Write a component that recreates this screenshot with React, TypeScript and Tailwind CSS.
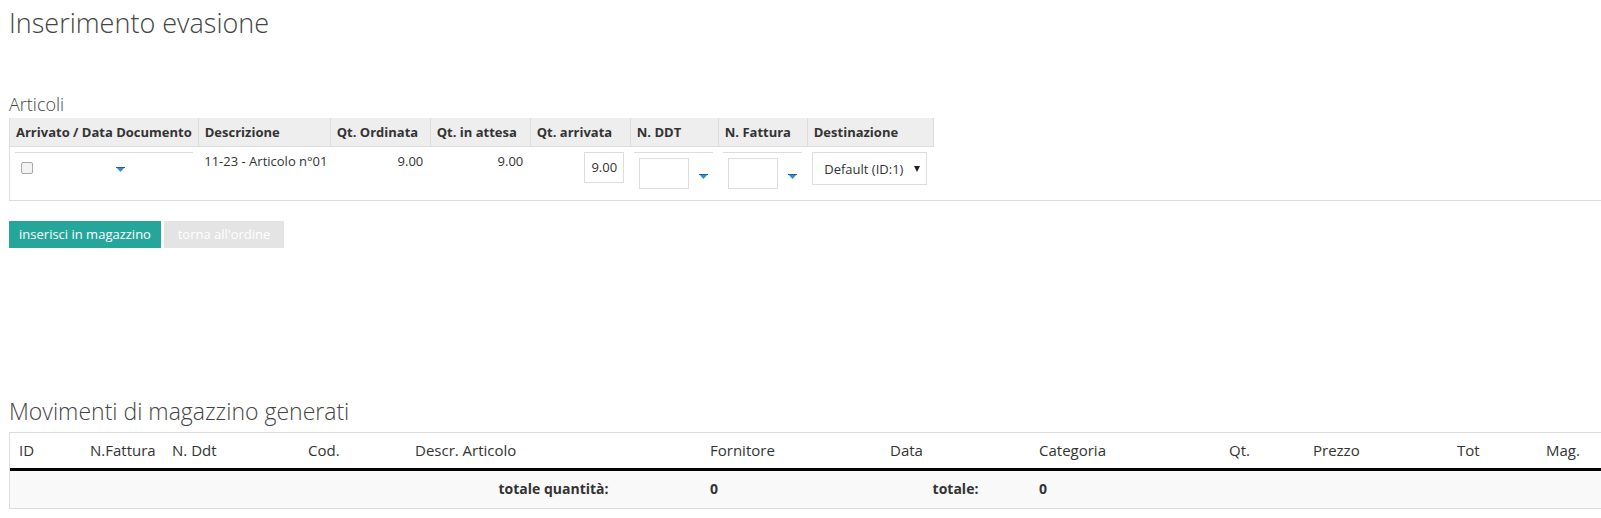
import React from 'react';

function Caret() {
  return (
    <svg width="9" height="5" viewBox="0 0 9 5" className="block">
      <polygon points="0,0 9,0 4.5,5" fill="#2f8ae4" />
      <rect x="0" y="0" width="9" height="1" fill="#2a5b8c" />
    </svg>
  );
}

function SelectArrow() {
  return (
    <svg width="6" height="6" viewBox="0 0 6 6" className="block">
      <polygon points="0,0 6,0 3,6" fill="#222" />
    </svg>
  );
}

function BoxPicker() {
  return (
    <div className="flex items-start border-t border-[#ddd]">
      <div className="ml-[5px] mt-[5px] h-[31px] w-[50px] border border-[#ddd] bg-white" />
      <div className="ml-[10px] mt-[21px]">
        <Caret />
      </div>
    </div>
  );
}

const headCls =
  'border-r border-b border-[#ddd] bg-[#eee] px-[6px] py-[5px] text-left font-bold leading-[18px] whitespace-nowrap';

const movCols = [
  { label: 'ID', w: 'w-[71px]' },
  { label: 'N.Fattura', w: 'w-[82px]' },
  { label: 'N. Ddt', w: 'w-[136px]' },
  { label: 'Cod.', w: 'w-[107px]' },
  { label: 'Descr. Articolo', w: 'w-[295px]' },
  { label: 'Fornitore', w: 'w-[180px]' },
  { label: 'Data', w: 'w-[149px]' },
  { label: 'Categoria', w: 'w-[190px]' },
  { label: 'Qt.', w: 'w-[84px]' },
  { label: 'Prezzo', w: 'w-[144px]' },
  { label: 'Tot', w: 'w-[89px]' },
  { label: 'Mag.', w: '' },
];

export default function App() {
  return (
    <div className="min-h-[518px] bg-white pl-[9px] pt-[4px] font-['Open_Sans','Liberation_Sans',sans-serif] text-[13px] text-[#333]">
      <h1 className="text-[27px] font-light leading-[38px] text-[#444]">Inserimento evasione</h1>

      <div className="mt-[50px] text-[18px] font-light leading-[24px] text-[#444]">Articoli</div>

      <div className="mt-[2px] border-b border-l border-[#ddd]">
        <table className="table-fixed border-collapse">
          <thead>
            <tr>
              <th className={`${headCls} w-[185px]`}>Arrivato / Data Documento</th>
              <th className={`${headCls} w-[132px]`}>Descrizione</th>
              <th className={`${headCls} w-[100px]`}>Qt. Ordinata</th>
              <th className={`${headCls} w-[100px]`}>Qt. in attesa</th>
              <th className={`${headCls} w-[100px]`}>Qt. arrivata</th>
              <th className={`${headCls} w-[88px]`}>N. DDT</th>
              <th className={`${headCls} w-[89px]`}>N. Fattura</th>
              <th className={`${headCls} w-[126px]`}>Destinazione</th>
            </tr>
          </thead>
          <tbody>
            <tr className="h-[53px] align-top leading-[18px]">
              <td className="pl-[5px] pr-[5px] pt-[5px]">
                <div className="flex h-[37px] items-start border-t border-[#ddd]">
                  <div className="ml-[6px] mt-[9px] h-[12px] w-[12px] rounded-[2px] border border-[#a9a9a9] bg-[#f3f3f3]" />
                  <div className="ml-[83px] mt-[14px]">
                    <Caret />
                  </div>
                </div>
              </td>
              <td className="pl-[6px] pt-[5px] whitespace-nowrap">11-23 - Articolo n°01</td>
              <td className="pr-[7px] pt-[5px] text-right">9.00</td>
              <td className="pr-[7px] pt-[5px] text-right">9.00</td>
              <td className="pr-[6px] pt-[5px] text-right">
                <div className="ml-auto h-[31px] w-[40px] border border-[#ddd] text-center leading-[29px]">9.00</div>
              </td>
              <td className="pl-[4px] pr-[5px] pt-[5px]">
                <BoxPicker />
              </td>
              <td className="pl-[5px] pr-[5px] pt-[5px]">
                <BoxPicker />
              </td>
              <td className="pl-[5px] pt-[5px]">
                <div className="flex h-[33px] w-[115px] items-center justify-between border border-[#ddd] pl-[11px] pr-[6px] text-[13px]">
                  <span>Default (ID:1)</span>
                  <SelectArrow />
                </div>
              </td>
            </tr>
          </tbody>
        </table>
      </div>

      <div className="mt-[20px] flex gap-[3px]">
        <button type="button" className="h-[27px] w-[152px] bg-[#26a69a] text-[13px] leading-[18px] text-white">
          inserisci in magazzino
        </button>
        <button type="button" className="h-[27px] w-[120px] bg-[#e4e4e4] text-[13px] leading-[18px] text-white">
          torna all'ordine
        </button>
      </div>

      <h2 className="mt-[148px] text-[23px] font-light leading-[30px] text-[#444]">Movimenti di magazzino generati</h2>

      <div className="mt-[6px] border-b border-l border-t border-[#ddd]">
        <table className="w-full table-fixed border-collapse">
          <thead>
            <tr className="h-[37px] border-b-[3px] border-black text-[15px]">
              {movCols.map((c) => (
                <th key={c.label} className={`${c.w} pl-[9px] text-left font-normal leading-[20px] whitespace-nowrap`}>
                  {c.label}
                </th>
              ))}
            </tr>
          </thead>
          <tfoot>
            <tr className="h-[38px] bg-[#f9f9f9] text-[14px] font-bold leading-[20px]">
              <td />
              <td />
              <td />
              <td />
              <td className="text-center whitespace-nowrap">totale quantità:</td>
              <td className="pl-[9px]">0</td>
              <td className="text-center">totale:</td>
              <td className="pl-[9px]">0</td>
              <td />
              <td />
              <td />
              <td />
            </tr>
          </tfoot>
        </table>
      </div>
    </div>
  );
}
